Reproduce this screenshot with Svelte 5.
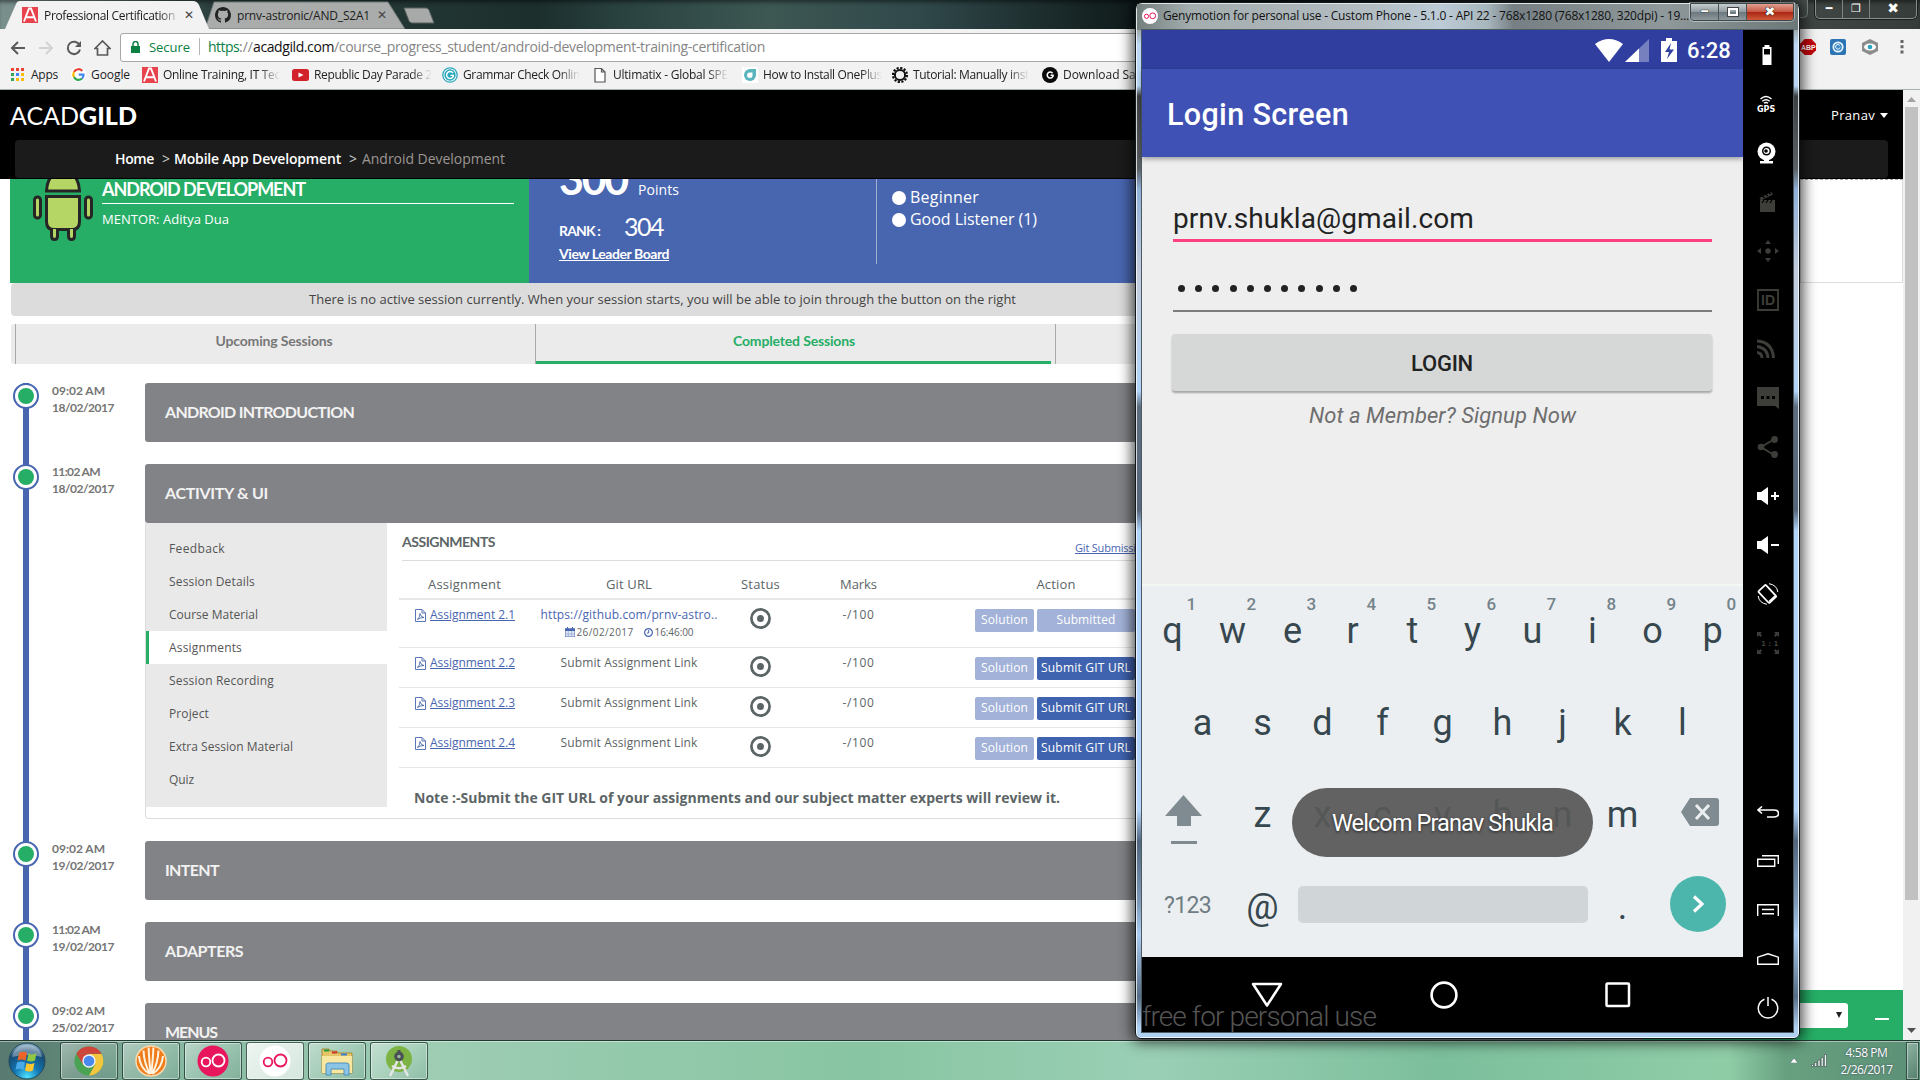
<script>
  // Spreads the letters of a label so that it fills the given width.
  function fit(node, width) {
    if (!width) return;
    const natural = node.getBoundingClientRect().width;
    const count = node.textContent.length;
    node.style.letterSpacing = `${(width - natural) / count}px`;
  }

  const bookmarks = [
    { icon: 'acad', label: 'Online Training, IT Tec', w: 117 },
    { icon: 'tube', label: 'Republic Day Parade 2', w: 118 },
    { icon: 'grammar', label: 'Grammar Check Onlin', w: 117 },
    { icon: 'doc', label: 'Ultimatix - Global SPE', w: 115 },
    { icon: 'leaf', label: 'How to Install OnePlus', w: 119 },
    { icon: 'gear', label: 'Tutorial: Manually inst', w: 116 },
    { icon: 'gblack', label: 'Download San', w: 80 },
  ];

  const menu = [
    ['Feedback', 56], ['Session Details', 86], ['Course Material', 89], ['Assignments', 73],
    ['Session Recording', 105], ['Project', 40], ['Extra Session Material', 124], ['Quiz', 25],
  ];

  const assignments = [
    { name: 'Assignment 2.1', sent: true },
    { name: 'Assignment 2.2' },
    { name: 'Assignment 2.3' },
    { name: 'Assignment 2.4' },
  ];

  const sessions = [
    { time: '09:02 AM', tw: 53, date: '18/02/2017', title: 'ANDROID INTRODUCTION', w: 189 },
    { time: '11:02 AM', tw: 48, date: '18/02/2017', title: 'ACTIVITY & UI', w: 103, open: true },
    { time: '09:02 AM', tw: 53, date: '19/02/2017', title: 'INTENT', w: 54 },
    { time: '11:02 AM', tw: 48, date: '19/02/2017', title: 'ADAPTERS', w: 78 },
    { time: '09:02 AM', tw: 53, date: '25/02/2017', title: 'MENUS', w: 52 },
  ];

  const row1 = 'qwertyuiop'.split('');
  const row2 = 'asdfghjkl'.split('');
  const row3 = 'zxcvbnm'.split('');
  const dots = Array(11).fill(0);
  const tools = ['battery', 'gps', 'cam', 'clap', 'move', 'id', 'rss', 'chat', 'share', 'volup', 'voldown', 'rotate', 'one'];
  const keys = ['back', 'recent', 'menu', 'home', 'power'];
  const tasks = ['chrome', 'shell', 'genyred', 'genywhite', 'folder', 'studio'];
</script>

{#snippet t(text, w, cls)}<span class="t {cls ?? ''}" use:fit={w}>{text}</span>{/snippet}

{#snippet icon(name)}
  {#if name === 'acad'}
    <svg width="16" height="16" viewBox="0 0 16 16"><rect width="16" height="16" fill="#e8434c" /><path d="M2 14.5 7 1.5h2l5 13M4.2 10.3h7.6" fill="none" stroke="#fff" stroke-width="1.9" /></svg>
  {:else if name === 'tube'}
    <svg width="17" height="16" viewBox="0 0 17 16"><rect y="2" width="17" height="12" rx="2.5" fill="#d2232a" /><path d="m6.5 5.5 5 2.5-5 2.5z" fill="#fff" /></svg>
  {:else if name === 'grammar'}
    <svg width="16" height="16" viewBox="0 0 16 16"><circle cx="8" cy="8" r="7.2" fill="#fff" stroke="#2ba8be" stroke-width="1.3" /><circle cx="8" cy="8" r="5.7" fill="#2ba8be" /><path d="M11 6a3.5 3.5 0 1 0 .3 3.4V8.4H8.5" fill="none" stroke="#fff" stroke-width="1.4" /></svg>
  {:else if name === 'doc'}
    <svg width="16" height="16" viewBox="0 0 16 16"><path d="M3 1.5h6.5L13 5v10H3zM9.5 1.5V5H13" fill="#fff" stroke="#555" stroke-width="1.2" /></svg>
  {:else if name === 'leaf'}
    <svg width="16" height="16" viewBox="0 0 16 16"><rect width="16" height="16" fill="#fff" /><path d="M14 2H8a6 6 0 1 0 6 6z" fill="#59b5bd" /><path d="M10.5 5.5H8A2.7 2.7 0 1 0 10.5 8z" fill="#fff" /></svg>
  {:else if name === 'gear'}
    <svg width="16" height="16" viewBox="0 0 16 16"><circle cx="8" cy="8" r="7" fill="none" stroke="#111" stroke-width="2.2" stroke-dasharray="2.2 1.46" /><circle cx="8" cy="8" r="5.1" fill="none" stroke="#111" stroke-width="2" /></svg>
  {:else if name === 'gblack'}
    <svg width="16" height="16" viewBox="0 0 16 16"><circle cx="8" cy="8" r="8" fill="#0a0a0a" /><path d="M10.6 6.2a3 3 0 1 0 .4 3V8.2H8.6" fill="none" stroke="#fff" stroke-width="1.6" /></svg>
  {:else if name === 'battery'}
    <svg width="22" height="22" viewBox="0 0 22 22"><path d="M5.5 3h2V1h5v2h2v18h-9z" fill="#fff" /><path d="M7 5h6v5.500H7z" fill="#000" /></svg>
  {:else if name === 'gps'}
    <svg width="22" height="20" viewBox="0 0 22 20"><path d="M3.500 5q5.500-5 11 0M5.300 7.300q3.700-3.200 7.400 0M7 9.300q2-1.600 4 0" fill="none" stroke="#fff" stroke-width="1.400" /><text x="0" y="17.500" class="gps">GPS</text></svg>
  {:else if name === 'cam'}
    <svg width="22" height="22" viewBox="0 0 22 22"><circle cx="9.500" cy="9.500" r="9" fill="#fff" /><circle cx="9.500" cy="9" r="4.500" /><circle cx="9.500" cy="9" r="3" fill="#fff" /><circle cx="9" cy="9" r="1.800" /><path d="M7 17h5v2h4v2.500H3V19h4z" fill="#fff" /></svg>
  {:else if name === 'clap'}
    <svg width="22" height="22" viewBox="0 0 22 22" fill="#3d3e39"><path d="M3 9h15v12H3z" /><path d="m2.500 7 12-6 1.500 2.500-12 6z" /><path d="m5 5 3 2m0-4 3 2m0-4 3 2M5 12l2-3m2 3 2-3m2 3 2-3" stroke="#000" stroke-width="1.200" /></svg>
  {:else if name === 'move'}
    <svg width="22" height="22" viewBox="0 0 22 22" fill="#3d3e39"><circle cx="11" cy="11" r="2.700" /><path d="m11 0 3 4H8zm0 22 3-4H8zM0 11l4-3v6zm22 0-4-3v6z" /></svg>
  {:else if name === 'id'}
    <svg width="22" height="22" viewBox="0 0 22 22"><path d="M1 1h20v20H1z" fill="none" stroke="#3d3e39" stroke-width="1.800" /><text x="4" y="16" class="idtext">ID</text></svg>
  {:else if name === 'rss'}
    <svg width="22" height="22" viewBox="0 0 22 22"><path d="M0 3q15.500 1 16.500 17M0 8.500Q10.500 10 11 20M0 14.500q5 .5 5 5.500" fill="none" stroke="#3d3e39" stroke-width="3" /></svg>
  {:else if name === 'chat'}
    <svg width="22" height="22" viewBox="0 0 22 22"><path d="M0 0h22v22l-4-3H0z" fill="#3d3e39" /><path d="M4 9h3v3H4zm5.500 0h3v3h-3zM15 9h3v3h-3z" /></svg>
  {:else if name === 'share'}
    <svg width="22" height="22" viewBox="0 0 22 22" fill="#3d3e39"><path d="M17 3.500 4 11l13 8" fill="none" stroke="#3d3e39" stroke-width="2" /><circle cx="4" cy="11" r="3.300" /><circle cx="17.500" cy="3.500" r="3.400" /><circle cx="17.500" cy="18.500" r="3.400" /></svg>
  {:else if name === 'volup'}
    <svg width="22" height="20" viewBox="0 0 22 20"><path d="M0 6h4l7-5v18l-7-5H0zm17 0h2v3h3v2h-3v3h-2v-3h-3V9h3z" fill="#fff" /></svg>
  {:else if name === 'voldown'}
    <svg width="22" height="20" viewBox="0 0 22 20"><path d="M0 6h4l7-5v18l-7-5H0zm14 3h8v2h-8z" fill="#fff" /></svg>
  {:else if name === 'rotate'}
    <svg width="22" height="22" viewBox="0 0 22 22" fill="none" stroke="#fff"><rect x="5.500" y="2.500" width="10" height="16" rx="1" transform="rotate(-43 11 11)" stroke-width="1.800" /><path d="m12 18.500 6-5.500" stroke-width="1.500" /><path d="M12 .7Q20 2 20.800 9M10 21.300Q2 20 1.200 13" stroke-width="1" /></svg>
  {:else if name === 'one'}
    <svg width="22" height="22" viewBox="0 0 22 22" fill="#3d3e39"><path d="M0 0h5L3.500 1.500 5 3.500 3.500 5 1.800 3.200 0 5zM22 0h-5l1.500 1.500L17 3.500 18.500 5l1.700-1.800L22 5zM0 22h5l-1.500-1.500L5 18.500 3.500 17l-1.700 1.800L0 17zM22 22h-5l1.500-1.500-1.500-2 1.500-1.500 1.700 1.800L22 17z" /><text x="4" y="13.500" class="onetext">1 : 1</text></svg>
  {:else if name === 'back'}
    <svg width="22" height="12" viewBox="0 0 22 12"><path d="M5 .5 1 4l4 3.500M1 4h16q4.500 0 4.500 3.500T17 11h-7" fill="none" stroke="#fff" stroke-width="1.600" /></svg>
  {:else if name === 'recent'}
    <svg width="22" height="12" viewBox="0 0 22 12"><path d="M.7 4.200h17v7H.7zM5 .8h16.300V9" fill="none" stroke="#fff" stroke-width="1.400" /></svg>
  {:else if name === 'menu'}
    <svg width="22" height="12" viewBox="0 0 22 12"><path d="M.7 12V.8h20.600V12M5 5.500h12M5 9.800h12" fill="none" stroke="#fff" stroke-width="1.400" /></svg>
  {:else if name === 'home'}
    <svg width="22" height="12" viewBox="0 0 22 12"><path d="M.7 11.300V4.200L11 .8l10.300 3.400v7.100z" fill="none" stroke="#fff" stroke-width="1.400" /></svg>
  {:else if name === 'power'}
    <svg width="22" height="22" viewBox="0 0 22 22"><path d="M7.500 2.200a9.700 9.700 0 1 0 7 0M11 0v9" fill="none" stroke="#fff" stroke-width="1.500" /></svg>
  {:else if name === 'chrome'}
    <svg width="30" height="30" viewBox="0 0 30 30"><circle cx="15" cy="15" r="14.500" fill="#4aa352" /><path d="M2.400 7.700A14.500 14.500 0 0 1 27.600 7.800H15z" fill="#d0453b" /><path d="M2.400 7.700 9 18.500 15 8h12.600z" fill="#d0453b" /><path d="M27.600 8H15l6.500 10-6.500 11.500A14.500 14.500 0 0 0 27.600 8" fill="#f4c63d" /><circle cx="15" cy="15" r="6.700" fill="#f2f2f2" /><circle cx="15" cy="15" r="5.300" fill="#4a8af0" /></svg>
  {:else if name === 'shell'}
    <svg width="32" height="32" viewBox="0 0 32 32"><circle cx="16" cy="16" r="15" fill="#ef7d1b" stroke="#fbd9ae" stroke-width="1.500" /><path d="M14.500 29Q5 23 4 11M15 29Q9 18 8.500 5.500M15.700 29Q14 14 13.600 2.500M16.300 29Q18 14 18.400 2.500M17 29Q23 18 23.500 5.500M17.500 29q9.500-6 10.500-18" fill="none" stroke="#fff3df" stroke-width="2" /></svg>
  {:else if name === 'genyred' || name === 'genywhite'}
    <svg width="32" height="32" viewBox="0 0 32 32"><circle cx="16" cy="16" r="15.500" fill={name === 'genyred' ? '#e8175d' : '#fff'} /><g fill="none" stroke={name === 'genyred' ? '#fff' : '#e8175d'} stroke-width="1.800"><circle cx="9" cy="17" r="4.300" /><circle cx="21.500" cy="15.500" r="6" /></g></svg>
  {:else if name === 'folder'}
    <svg width="34" height="32" viewBox="0 0 34 32"><path d="M2 4h7l1 2h7l1 2h14v20H2z" fill="#e5c567" stroke="#a98a35" /><path d="M4 4.500h5v2H4z" fill="#1c9a3e" /><path d="M12 6.500h5v2h-5z" fill="#c93030" /><path d="M21 8.500h6v2h-6z" fill="#3a7fd0" /><path d="M2 11h30v17H2z" fill="#f7e7a0" /><path d="M6 30V20q0-2 3-2h17q3 0 3 2v10h-5v-6H11v6z" fill="#8cc4e6" stroke="#4b8fbb" /></svg>
  {:else if name === 'studio'}
    <svg width="28" height="32" viewBox="0 0 28 32"><circle cx="14" cy="14" r="13" fill="#7cb342" /><circle cx="14" cy="11.500" r="4.800" fill="#4b5054" /><circle cx="14" cy="11.500" r="1.700" fill="#9cb8a8" /><path d="M14 5v3" stroke="#4b5054" stroke-width="3" /><path d="M12.500 16 5 31M15.500 16 23 31M7 21q7 4.500 14 0" fill="none" stroke="#e6e6e6" stroke-width="2.500" /></svg>
  {/if}
{/snippet}

<div class="desktop">
  <div class="browser">
    <div class="tabstrip">
      <svg class="tabshapes" width="440" height="29" viewBox="0 0 440 29">
        <path d="M205 29 214 2h174l17 27z" fill="#a9acaa" stroke="#6a7674" />
        <path d="M404 8h22q2 0 3 2l5 13h-22q-2 0-3-2z" fill="#a7aaa9" stroke="#56615f" />
        <path d="M5 29 16 4q1-3 4-3h173q4 0 6 4l10 24z" fill="#f2f2f2" />
      </svg>
      <div class="tab first">{@render icon('acad')}{@render t('Professional Certification', 131, 'tabname fadelate')}<span class="x">✕</span></div>
      <div class="tab second">
        <svg width="16" height="16" viewBox="0 0 16 16"><path fill="#222" d="M8 0C3.600 0 0 3.600 0 8c0 3.500 2.300 6.500 5.500 7.600.4.100.5-.2.500-.4v-1.500c-2 .5-2.700-.9-2.900-1.600-.4-.6-.9-.9-1.200-1 .6-.3 1.200.1 1.700.9.500.8 1.700.9 2.400.6.100-.5.300-.9.500-1.100-1.800-.2-3.600-.9-3.600-4 0-.9.300-1.600.8-2.200-.1-.2-.4-1 .1-2.100 0 0 .7-.2 2.200.8a7.500 7.500 0 0 1 4 0c1.500-1 2.200-.8 2.200-.8.400 1.100.2 1.900.1 2.100.5.600.8 1.300.8 2.200 0 3.100-1.900 3.800-3.700 4 .3.300.6.700.6 1.500v2.200c0 .2.100.5.600.4A8 8 0 0 0 16 8c0-4.400-3.600-8-8-8" /></svg>
        {@render t('prnv-astronic/AND_S2A1', 133, 'tabname')}<span class="x">✕</span>
      </div>
      <div class="wincontrols"><i>━</i><i>❐</i><i class="wide">✖</i></div>
    </div>

    <div class="toolbar">
      <div class="nav">
        <svg width="16" height="16" viewBox="0 0 16 16"><path d="M15 8H2M8 2 2 8l6 6" fill="none" stroke="#5a5a5a" stroke-width="2" /></svg>
        <svg width="16" height="16" viewBox="0 0 16 16"><path d="M1 8h13M8 2l6 6-6 6" fill="none" stroke="#d2d2d2" stroke-width="2" /></svg>
        <svg width="16" height="16" viewBox="0 0 16 16"><path d="M13.500 5A6.200 6.200 0 1 0 14 9.500" fill="none" stroke="#5a5a5a" stroke-width="2" /><path d="M15 1v6H9z" fill="#5a5a5a" /></svg>
        <svg width="17" height="16" viewBox="0 0 17 16"><path d="M1 8.500 8.500 1 16 8.500h-2.500V15h-10V8.500z" fill="none" stroke="#5a5a5a" stroke-width="1.700" /></svg>
      </div>
      <div class="omnibox">
        <svg width="9" height="12" viewBox="0 0 9 12"><path d="M0 5h9v7H0z" fill="#0b8043" /><path d="M2 5V3a2.500 2.500 0 0 1 5 0v2" fill="none" stroke="#0b8043" stroke-width="1.500" /></svg>
        {@render t('Secure', 41, 'secure')}
        <i class="bar"></i>
        {@render t('https', 31, 'url green')}{@render t('://', 14, 'url')}{@render t('acadgild.com', 81, 'url dark')}{@render t('/course_progress_student/android-development-training-certification', 431, 'url')}
      </div>
      <div class="exts">
        <svg width="16" height="16" viewBox="0 0 16 16"><path d="M4.700 0h6.600L16 4.700v6.600L11.300 16H4.700L0 11.300V4.700z" fill="#c4050a" /><text x="1" y="11" class="abp">ABP</text></svg>
        <svg width="16" height="16" viewBox="0 0 16 16"><rect width="16" height="16" rx="2" fill="#2c75b5" /><circle cx="8" cy="8" r="4.700" fill="#3b8bcb" stroke="#eaf5ff" stroke-width="1.700" /><path d="M9.800 6.500a2.300 2.300 0 1 0 .3 2" stroke="#fff" fill="none" /></svg>
        <svg width="16" height="16" viewBox="0 0 16 16"><path d="m8 0 8 4v8l-8 4-8-4V4z" fill="#8c8c8c" /><ellipse cx="8" cy="8" rx="6" ry="3.500" fill="#fff" /><circle cx="8" cy="8" r="2.300" fill="#2aa5c0" /></svg>
        <svg width="4" height="14" viewBox="0 0 4 14"><path d="M.5 0h3v3h-3zm0 5.200h3v3h-3zm0 5.200h3v3h-3z" fill="#666" /></svg>
      </div>
    </div>

    <div class="bookmarks">
      <div class="bm apps">
        <span class="appgrid">{#each ['r', 'r', 'r', 'g', 'b', 'y', 'g', 'y', 'y'] as c}<i class={c}></i>{/each}</span>
        {@render t('Apps', 27)}
      </div>
      <div class="bm google">
        <svg width="15" height="15" viewBox="0 0 15 15"><circle cx="7.500" cy="7.500" r="7.500" fill="#fff" /><g fill="none" stroke-width="2.200"><path d="M11.300 4A5 5 0 0 0 3 5" stroke="#ea4335" /><path d="M3 5a5 5 0 0 0 0 5" stroke="#fbbc05" /><path d="M3 10a5 5 0 0 0 8 1.500" stroke="#34a853" /><path d="M11 11.500A5 5 0 0 0 12.500 7.600H7.700" stroke="#4285f4" /></g></svg>
        {@render t('Google', 39)}
      </div>
      {#each bookmarks as b}
        <div class="bm site">{@render icon(b.icon)}{@render t(b.label, b.w, 'fade')}</div>
      {/each}
    </div>

    <div class="viewport">
      <div class="page">
        <header>
          <div class="logo">{@render t('ACAD', 69)}{@render t('GILD', 58, 'heavy')}</div>
          <div class="user">{@render t('Pranav', 44)}<svg width="8" height="5" viewBox="0 0 8 5"><path d="M0 0h8L4 5z" fill="#fff" /></svg></div>
        </header>
        <div class="crumbwrap">
          <div class="crumbs">
            {@render t('Home', 39, 'b')}{@render t('>', 8, 'sep')}{@render t('Mobile App Development', 167, 'b')}{@render t('>', 8, 'sep')}{@render t('Android Development', 143, 'dim')}
          </div>
        </div>

        <div class="hero">
          <div class="course">
            <svg class="droid" width="60" height="80" viewBox="0 0 60 80"><g fill="#b5d665" stroke="#262626" stroke-width="3"><path d="M13.500 30Q14.500 11 30 11t16.500 19z" /><path d="M13.500 35.500h33v25q0 8-7 8h-19q-7 0-7-8z" /><rect x="1.500" y="36" width="6" height="21" rx="3" /><rect x="52.500" y="36" width="6" height="21" rx="3" /><path d="M18.500 68v7q0 3.500 3 3.500t3-3.500v-7M35.500 68v7q0 3.500 3 3.500t3-3.500v-7" /></g></svg>
            <div class="cinfo">
              <div class="ctitle">{@render t('ANDROID DEVELOPMENT', 203)}</div>
              <div class="mentor">{@render t('MENTOR: Aditya Dua', 127)}</div>
            </div>
          </div>
          <div class="score">
            <div class="points">{@render t('300', 68, 'big')}{@render t('Points', 41, 'pts')}</div>
            <div class="rank">{@render t('RANK :', 41, 'rl')}{@render t('304', 39, 'rn')}</div>
            <div class="leader">{@render t('View Leader Board', 110)}</div>
          </div>
          <div class="badges">
            <div><i></i>{@render t('Beginner', 69)}</div>
            <div><i></i>{@render t('Good Listener (1)', 127)}</div>
          </div>
          <div class="blank"></div>
        </div>

        <div class="notice">{@render t('There is no active session currently. When your session starts, you will be able to join through the button on the right', 707)}</div>

        <div class="tabs">
          <div class="stab">{@render t('Upcoming Sessions', 117)}</div>
          <div class="stab on">{@render t('Completed Sessions', 122)}</div>
          <div class="stab"></div>
        </div>

        <div class="timeline">
          {#each sessions as s}
            <div class="session" class:open={s.open}>
              <div class="rail"><i></i></div>
              <div class="when">{@render t(s.time, s.tw)}{@render t(s.date, 62)}</div>
              <div class="card">
                <div class="head">{@render t(s.title, s.w)}</div>
                {#if s.open}
                  <div class="body">
                    <nav>
                      {#each menu as m}
                        <div class="mi" class:active={m[0] === 'Assignments'}>{@render t(m[0], m[1])}</div>
                      {/each}
                    </nav>
                    <section>
                      <div class="shead"><div class="st">{@render t('ASSIGNMENTS', 93)}</div><div class="guide">{@render t('Git Submission Guide', 106)}</div></div>
                      <div class="tr th">
                        <div>{@render t('Assignment', 73)}</div><div>{@render t('Git URL', 46)}</div><div>{@render t('Status', 39)}</div><div>{@render t('Marks', 37)}</div><div class="act">{@render t('Action', 39)}</div>
                      </div>
                      {#each assignments as a}
                        <div class="tr" class:tall={a.sent}>
                          <div class="name">
                            <svg width="11" height="13" viewBox="0 0 11 13"><path d="M.5.500H7L10.500 4v8.500H.5zM7 .5V4h3.500M2.500 10.500Q5 8 5 4.500q1 4 4 4-4 0-6.500 2" fill="none" stroke="#4866b0" stroke-width=".9" /></svg>
                            {@render t(a.name, 85, 'link')}
                          </div>
                          <div class="git">
                            {#if a.sent}
                              {@render t('https://github.com/prnv-astro..', 177, 'blue')}
                              <div class="stamp">
                                <svg width="10" height="10" viewBox="0 0 10 10"><path d="M0 2h10v8H0z" fill="#dfe5f3" stroke="#4866b0" /><path d="M0 1.500h10V4H0zM2 0h1v2H2zm5 0h1v2H7z" fill="#4866b0" /><path d="M3.300 4v6M6.600 4v6M0 7h10" stroke="#8a9dcd" stroke-width=".6" /></svg>
                                {@render t('26/02/2017', 57)}
                                <svg class="clock" width="9" height="9" viewBox="0 0 9 9"><circle cx="4.500" cy="4.500" r="3.900" fill="none" stroke="#4866b0" stroke-width="1.200" /><path d="M4.700 2v3H3" fill="none" stroke="#4866b0" /></svg>
                                {@render t('16:46:00', 39)}
                              </div>
                            {:else}
                              {@render t('Submit Assignment Link', 137)}
                            {/if}
                          </div>
                          <div class="status"><svg width="21" height="21" viewBox="0 0 21 21"><circle cx="10.500" cy="10.500" r="9.100" fill="none" stroke="#5c6566" stroke-width="2.700" /><circle cx="10.500" cy="10.500" r="3.500" fill="#5c6566" /></svg></div>
                          <div>{@render t('-/100', 32)}</div>
                          <div class="btns"><b class="soft">{@render t('Solution', 47)}</b><b class:soft={a.sent}>{#if a.sent}{@render t('Submitted', 59)}{:else}{@render t('Submit GIT URL', 90)}{/if}</b></div>
                        </div>
                      {/each}
                      <div class="note">{@render t('Note :-Submit the GIT URL of your assignments and our subject matter experts will review it.', 646)}</div>
                    </section>
                  </div>
                {/if}
              </div>
            </div>
          {/each}
        </div>
        <div class="chat"><span class="sel"><svg width="6" height="6" viewBox="0 0 6 6"><path d="M0 0h6L3 6z" fill="#222" /></svg></span><i></i></div>
      </div>
      <div class="scroll">
        <svg width="9" height="5" viewBox="0 0 9 5"><path d="M0 5h9L4.500 0z" fill="#a3a3a3" /></svg>
        <div class="thumb"></div>
        <svg width="9" height="5" viewBox="0 0 9 5"><path d="M0 0h9L4.500 5z" fill="#505050" /></svg>
      </div>
    </div>
  </div>

  <div class="taskbar">
    <svg class="orb" width="38" height="38" viewBox="0 0 38 38">
      <defs><radialGradient id="orb" cx=".5" cy=".95" r=".9"><stop offset="0" stop-color="#4fe3ff" /><stop offset=".4" stop-color="#1277b4" /><stop offset=".8" stop-color="#174a72" /><stop offset="1" stop-color="#7fa5bd" /></radialGradient></defs>
      <circle cx="19" cy="19" r="18" fill="url(#orb)" stroke="#23485c" />
      <path d="M4 15Q7 3 19 3t15 12q-15-4-30 0" fill="#fff" opacity=".35" />
      <path d="M11 11q4-2.500 8 0l-1.500 7.500q-4-2-8 0z" fill="#ef6428" /><path d="M20.500 11.500q4 2 8-.5L27 18.500q-4 2-8 .3z" fill="#8fc742" /><path d="M9 20.500q4-2 8 0L15.500 28q-4-2.500-8 0z" fill="#4aa9e8" /><path d="M18.500 21q4 2 8 0L25 28.500q-4 2-8 0z" fill="#fbc630" />
    </svg>
    <div class="tasks">{#each tasks as k}<div class="task" class:current={k === 'genywhite'}>{@render icon(k)}</div>{/each}</div>
    <div class="tray">
      <svg width="8" height="5" viewBox="0 0 8 5"><path d="M0 5h8L4 0z" fill="#fff" stroke="#456" stroke-width=".5" /></svg>
      <svg class="bars" width="16" height="13" viewBox="0 0 16 13"><path d="M.5 10.500h2v2h-2zM3.700 8.500h2v4h-2zM7 6h2v6.500H7zM10.200 3.500h2v9h-2zM13.400.5h2v12h-2z" fill="#fff" stroke="#344" stroke-width=".6" /></svg>
      <div class="clk">{@render t('4:58 PM', 42)}{@render t('2/26/2017', 52)}</div>
      <div class="peek"></div>
    </div>
  </div>

  <div class="hidden-button"></div>
  <div class="phone">
    <div class="title">
      <svg width="16" height="16" viewBox="0 0 16 16"><circle cx="8" cy="8" r="8" fill="#fff" /><circle cx="4.500" cy="8.300" r="2.100" fill="none" stroke="#e8175d" /><circle cx="10.700" cy="7.800" r="2.900" fill="none" stroke="#e8175d" /></svg>
      {@render t('Genymotion for personal use - Custom Phone - 5.1.0 - API 22 - 768x1280 (768x1280, 320dpi) - 19...', 526)}
      <div class="pctl"><i>━</i><i><s></s></i><i class="red">✖</i></div>
    </div>
    <div class="glass">
      <div class="screen">
        <div class="sbar">
          <svg width="28" height="23" viewBox="0 0 28 23"><path d="M0 5Q14-5 28 5L14 23z" fill="#fff" /></svg>
          <svg class="sig" width="24" height="23" viewBox="0 0 24 23"><path d="M0 23 24 0v23z" fill="#7680bf" /><path d="M0 23 14 9.500V23z" fill="#fff" /></svg>
          <svg class="bat" width="16" height="24" viewBox="0 0 16 24"><path d="M0 3h5V0h6v3h5v21H0z" fill="#fff" /><path d="m10 5-6 9h4l-2 7 7-9.500H8.500z" fill="#303f9f" /></svg>
          {@render t('6:28', 44)}
        </div>
        <div class="appbar">{@render t('Login Screen', 182)}</div>
        <div class="form">
          <div class="email">{@render t('prnv.shukla@gmail.com', 301)}</div>
          <div class="pass">{#each dots as d}<i></i>{/each}</div>
          <div class="login">{@render t('LOGIN', 62)}</div>
          <div class="signup">{@render t('Not a Member? Signup Now', 267)}</div>
        </div>
        <div class="kb">
          <div class="krow">{#each row1 as k, i}<span class="key"><small>{(i + 1) % 10}</small>{k}</span>{/each}</div>
          <div class="krow">{#each row2 as k}<span class="key">{k}</span>{/each}</div>
          <div class="krow">
            <span class="key edge"><svg width="38" height="50" viewBox="0 0 38 50"><path d="M18.500 0 37 21H26v10H12V21H0zM6 46h26v3H6z" fill="#7f8b90" /></svg></span>
            {#each row3 as k}<span class="key">{k}</span>{/each}
            <span class="key edge bk"><svg width="38" height="28" viewBox="0 0 38 28"><path d="M9 0h26q3 0 3 3v22q0 3-3 3H9L0 14z" fill="#7f8b90" /><path d="m15 7 13 14m0-14L15 21" stroke="#eceff1" stroke-width="3" /></svg></span>
          </div>
          <div class="krow">
            <span class="key edge num">{@render t('?123', 47)}</span><span class="key at">@</span><span class="space"></span><span class="key">.</span>
            <span class="key edge enter"><span class="go"><svg width="12" height="18" viewBox="0 0 12 18"><path d="m2 1.500 8 7.500-8 7.500" fill="none" stroke="#fff" stroke-width="3.200" /></svg></span></span>
          </div>
          <div class="toast">{@render t('Welcom Pranav Shukla', 221)}</div>
        </div>
        <div class="navbar">
          <svg width="32" height="26" viewBox="0 0 32 26"><path d="M2 2h28L16 23.500z" fill="none" stroke="#fff" stroke-width="2.500" stroke-linejoin="round" /></svg>
          <svg width="28" height="28" viewBox="0 0 28 28"><circle cx="14" cy="14" r="12.400" fill="none" stroke="#fff" stroke-width="2.600" /></svg>
          <svg width="26" height="26" viewBox="0 0 26 26"><rect x="1.500" y="1.500" width="22.500" height="22.500" rx="1" fill="none" stroke="#fff" stroke-width="2.500" /></svg>
          <div class="watermark">{@render t('free for personal use', 234)}</div>
        </div>
      </div>
      <div class="tools">
        {#each tools as k}<div class="tool">{@render icon(k)}</div>{/each}
        <div class="push"></div>
        {#each keys as k}<div class="tool">{@render icon(k)}</div>{/each}
      </div>
    </div>
  </div>
</div>

<style>
  :global(body) { margin: 0; overflow: hidden; }
  .desktop { position: relative; width: 1920px; height: 1080px; overflow: hidden; background: #fff; font-family: "Open Sans", "Noto Sans", sans-serif; }
  .desktop, .desktop :global(*) { box-sizing: border-box; }
  svg { display: block; flex: none; }
  i { font-style: normal; }
  .t { display: inline-block; white-space: nowrap; flex: none; }
  .fade { -webkit-mask-image: linear-gradient(90deg, #000 82%, transparent 100%); mask-image: linear-gradient(90deg, #000 82%, transparent 100%); }
  .fadelate { -webkit-mask-image: linear-gradient(90deg, #000 88%, rgba(0, 0, 0, .25) 100%); mask-image: linear-gradient(90deg, #000 88%, rgba(0, 0, 0, .25) 100%); }

  .browser { height: 1040px; display: flex; flex-direction: column; }
  .tabstrip { position: relative; height: 29px; display: flex; align-items: center; background: linear-gradient(90deg, #7a908d 0, #6c817d 4%, #2b403e 11%, #1c2f2d 28%, #2b4442 33%, #3d5753 40%, #30484a 48%, #182626 56%, #0d1718 60%, #3f4643 94%, #363c3a 100%); box-shadow: inset 0 4px 4px -2px rgba(0, 0, 0, .5); }
  .tabshapes { position: absolute; left: 0; top: 0; }
  .tab { position: relative; display: flex; align-items: center; padding-top: 1px; }
  .tab.first { width: 172px; margin: 0 21px 0 22px; }
  .tab.second { width: 180px; }
  .tabname { margin-left: 6px; font-size: 12px; color: #1c1c1c; }
  .x { margin-left: auto; font-size: 12px; color: #444; font-family: "DejaVu Sans", sans-serif; }
  .tab.second .x { margin-right: 8px; }
  .wincontrols { align-self: flex-start; display: flex; margin-left: auto; margin-right: 3px; width: 102px; height: 19px; border: 1px solid #85908c; border-top: 0; border-radius: 0 0 5px 5px; box-shadow: 0 0 0 1px #1a1f1e; color: #fff; font: 11px/17px "DejaVu Sans", sans-serif; text-align: center; }
  .wincontrols i { width: 27px; border-right: 1px solid #7a8481; }
  .wincontrols .wide { width: 46px; border: 0; font-size: 14px; }

  .toolbar { height: 33px; display: flex; align-items: center; background: #f2f2f2; padding: 4px 16px 0 10px; }
  .nav { display: flex; gap: 12px; width: 110px; }
  .omnibox { flex: 1; height: 29px; display: flex; align-items: center; background: #fff; border: 1px solid #a8a8a8; border-radius: 3px; padding: 0 0 2px 10px; font-size: 14px; color: #858585; }
  .secure { margin-left: 9px; color: #0b8043; font-size: 13px; }
  .bar { width: 1px; height: 17px; background: #b5b5b5; margin: 0 8px 0 9px; }
  .green { color: #0b8043; }
  .dark { color: #111; }
  .exts { display: flex; align-items: center; gap: 16px; width: 104px; margin-left: 8px; padding-bottom: 2px; }
  .exts svg:last-child { margin-left: 6px; }
  .exts svg:nth-child(2) { margin-left: -2px; }
  .abp { font: bold 7px "Liberation Sans", sans-serif; fill: #fff; }

  .bookmarks { height: 28px; display: flex; align-items: center; background: #f2f2f2; border-bottom: 1px solid #a9b3ae; padding: 0 0 2px 11px; overflow: hidden; font-size: 12px; color: #222; }
  .bm { display: flex; align-items: center; gap: 6px; flex: none; }
  .apps { width: 60px; gap: 7px; }
  .google { width: 71px; gap: 5px; }
  .site { width: 150px; gap: 5px; }
  .appgrid { display: grid; grid-template-columns: repeat(3, 3px); gap: 2px; }
  .appgrid i { width: 3px; height: 3px; background: #fbbc05; }
  .appgrid .r { background: #ea4335; }
  .appgrid .g { background: #34a853; }
  .appgrid .b { background: #4285f4; }

  .viewport { flex: 1; display: flex; min-height: 0; }
  .page { position: relative; width: 1903px; overflow: hidden; background: #fff; }
  header { height: 50px; background: #000; display: flex; align-items: center; justify-content: space-between; padding: 0 15px 0 10px; color: #fff; }
  .logo { font: 400 25px/25px Lato, sans-serif; display: flex; }
  .heavy { font-weight: 900; }
  .user { display: flex; align-items: center; gap: 5px; font-size: 13px; }
  .crumbwrap { height: 39px; background: #000; padding: 0 15px; }
  .crumbs { height: 38px; background: #1b1b1b; border-radius: 4px; display: flex; align-items: center; padding: 0 0 2px 100px; color: #fff; font-size: 14px; }
  .crumbs .b { font-weight: 600; }
  .sep { margin: 0 4px 0 8px; color: #ccc; }
  .dim { color: #9c9693; margin-left: 1px; }

  .hero { height: 104px; display: flex; margin-left: 10px; color: #fff; overflow: hidden; }
  .course { width: 519px; background: #26ae66; display: flex; padding-left: 23px; }
  .droid { margin-top: -18px; }
  .cinfo { flex: 1; margin: 0 15px 0 9px; }
  .ctitle { height: 25px; border-bottom: 1px solid #fff; font: 700 18px/21px Lato, sans-serif; }
  .mentor { font-size: 13px; line-height: 30px; }
  .score { width: 348px; height: 85px; background: #4866b0; padding-left: 30px; box-shadow: 0 20px 0 #4866b0; border-right: 1px solid #a0afd3; }
  .points { display: flex; height: 36px; align-items: flex-start; }
  .big { font: 700 43px/46px Lato, sans-serif; margin-top: -23px; }
  .pts { font-size: 14px; line-height: 22px; margin-left: 11px; }
  .rank { display: flex; align-items: baseline; height: 30px; line-height: 22px; font-family: Lato, sans-serif; }
  .rl { font-size: 14px; font-weight: 700; }
  .rn { font-size: 25px; margin-left: 24px; }
  .leader { font: 700 14px/18px Lato, sans-serif; }
  .leader .t, .guide .t { text-decoration: underline; }
  .badges { width: 923px; background: #4866b0; padding: 8px 0 0 15px; font-size: 16px; line-height: 22px; }
  .badges div { display: flex; align-items: center; gap: 4px; height: 22px; }
  .badges .t { margin-top: -2px; }
  .badges i { width: 14px; height: 14px; border-radius: 50%; background: #fff; }
  .blank { flex: 1; background: #fff; border: 1px solid #ddd; border-top: 1px dashed #aaa; }

  .notice { height: 33px; margin-left: 11px; width: 1780px; background: #dcdcdc; border-radius: 4px; padding-left: 298px; font-size: 13px; line-height: 32px; color: #444; }
  .tabs { height: 40px; width: 1780px; margin: 8px 0 0 11px; background: #ebebeb; border-radius: 3px; display: flex; padding-left: 4px; }
  .stab { width: 520px; border-left: 1px solid #a9a9a9; display: flex; justify-content: center; font: 700 14px/34px Lato, sans-serif; color: #777; padding-right: 3px; }
  .stab.on { color: #26ae66; position: relative; }
  .stab.on::after { content: ""; position: absolute; left: 0; right: 4px; bottom: 0; height: 3px; background: #26ae66; }

  .timeline { margin-top: 19px; }
  .session { display: flex; height: 81px; }
  .session.open { height: 377px; }
  .rail { width: 26px; flex: none; margin-left: 13px; background: linear-gradient(#4866b0, #4866b0) 10px 0 / 6px 100% no-repeat; }
  .rail i { display: block; width: 26px; height: 26px; border-radius: 50%; border: 2px solid #4866b0; background: #fff; padding: 3px; }
  .rail i::after { content: ""; display: block; width: 16px; height: 16px; border-radius: 50%; background: #26ae66; }
  .when { width: 106px; flex: none; margin-top: -1px; padding-left: 13px; display: flex; flex-direction: column; align-items: flex-start; font: 700 12px/17px Lato, sans-serif; color: #757575; }
  .card { width: 1600px; flex: none; }
  .head { height: 59px; border-radius: 3px; background: #828386; color: #f2f2f2; padding-left: 20px; font: 700 16px/57px Lato, sans-serif; }
  .body { height: 296px; border: 1px solid #ddd; border-top: 0; border-radius: 0 0 4px 4px; display: flex; }
  nav { width: 241px; height: 284px; background: #e9e9e9; padding-top: 9px; font-size: 12px; color: #555; }
  .mi { height: 33px; line-height: 33px; padding-left: 23px; }
  .mi.active { background: #fff; box-shadow: inset 3px 0 #26ae66; }
  section { flex: 1; padding-left: 12px; font-size: 12px; color: #5c6566; }
  .shead { height: 38px; margin-left: 3px; border-bottom: 1px solid #ddd; display: flex; }
  .st { width: 673px; font: 700 14px/38px Lato, sans-serif; }
  .guide { font-size: 11px; line-height: 50px; color: #4866b0; }
  .tr { display: grid; grid-template-columns: 131px 198px 65px 131px 320px; height: 40px; border-bottom: 1px solid #e7e7e7; line-height: 16px; padding-top: 7px; text-align: center; }
  .th { height: 39px; border-bottom-width: 2px; padding-top: 15px; font-size: 13px; font-weight: 500; }
  .tr.tall { height: 48px; }
  .name { display: flex; gap: 4px; padding-left: 16px; align-items: flex-start; }
  .name svg { margin-top: 2px; }
  .link { color: #4866b0; text-decoration: underline; }
  .blue { color: #4866b0; }
  .stamp { display: flex; align-items: center; justify-content: center; font-size: 10px; gap: 2px; height: 18px; }
  .clock { margin-left: 8px; }
  .status { display: flex; justify-content: center; padding-top: 1px; }
  .btns { display: flex; gap: 3px; padding: 2px 0 0 51px; }
  .btns b { width: 59px; height: 23px; display: flex; justify-content: center; align-items: center; padding-bottom: 2px; border-radius: 2px; background: #4063af; color: #fff; font-weight: 500; font-size: 12px; }
  .btns b.soft { background: #a3b2d8; }
  .btns b:last-child { width: 98px; }
  .act { padding-right: 56px; }
  .note { font-size: 14px; font-weight: 700; padding-left: 15px; line-height: 60px; }

  .chat { position: absolute; right: 0; bottom: 0; width: 260px; height: 50px; background: #26ae66; display: flex; align-items: center; justify-content: flex-end; padding-right: 14px; gap: 27px; }
  .chat .sel { width: 180px; height: 25px; background: #fff; border-radius: 3px; display: flex; align-items: center; justify-content: flex-end; padding-right: 6px; }
  .chat i { width: 14px; height: 2px; background: #fff; margin-top: 8px; }
  .scroll { width: 17px; background: #f1f1f1; display: flex; flex-direction: column; align-items: center; padding: 7px 0; }
  .thumb { width: 13px; height: 793px; margin: 5px 0 auto; background: #c1c1c1; }

  .taskbar { position: relative; height: 40px; display: flex; align-items: center; border-top: 1px solid #1f3b31; background: linear-gradient(90deg, #587a70 0, #5e8476 3%, #86b59f 8%, #9ecdb4 22%, #88c5a2 45%, #9acfb5 60%, #7cbf9c 75%, #8fcda7 90%, #67a07f 93%, #5c9077 100%); box-shadow: inset 0 1px rgba(255, 255, 255, .45); }
  .orb { margin-left: 8px; }
  .tasks { display: flex; gap: 4px; margin-left: 14px; }
  .task { width: 58px; height: 38px; display: flex; align-items: center; justify-content: center; border: 1px solid rgba(20, 50, 40, .75); border-radius: 3px; box-shadow: inset 0 0 0 1px rgba(255, 255, 255, .45); background: linear-gradient(135deg, rgba(255, 255, 255, .42), rgba(255, 255, 255, .14) 50%, rgba(80, 130, 110, .2)); }
  .task.current { background: linear-gradient(135deg, rgba(255, 255, 255, .85), rgba(255, 255, 255, .6)); }
  .tray { margin-left: auto; display: flex; align-items: center; height: 39px; color: #fff; font-size: 12px; line-height: 17px; }
  .bars { margin-left: 13px; }
  .clk { display: flex; flex-direction: column; align-items: center; width: 79px; text-shadow: 0 0 2px #345; }
  .peek { width: 13px; height: 38px; margin-right: 1px; border: 1px solid #2f5145; box-shadow: inset 0 0 0 1px rgba(255, 255, 255, .4); background: linear-gradient(135deg, #8fb3a3, #55806d); }

  .hidden-button { position: absolute; left: 1780px; top: 0; width: 28px; height: 18px; border: 1px solid #7f8986; border-top: 0; border-radius: 0 0 5px; background: #4a5250; }
  .phone { position: absolute; left: 1135px; top: 2px; width: 665px; height: 1037px; border: 1px solid #10181c; border-radius: 7px 7px 6px 6px; display: flex; flex-direction: column; padding: 0 6px 6px; background: linear-gradient(180deg, #8b9698 0, #9aa5a7 2.500%, #bcd8f5 4%, #b9d6f6 8%, #3c4043 9%, #5b6064 16%, #8fb0d8 18%, #c2cbdc 26%, #b4d4f5 36%, #b0d3f8 37.500%, #5d6e80 39%, #56677c 49%, #b1d4fa 51%, #b4d6fc 78%, #52677f 81%, #7f9cba 87%, #abcdf1 90%, #566e86 96%, #b0d0f2 99%); box-shadow: inset 0 0 0 1px rgba(255, 255, 255, .75), 0 0 14px 3px rgba(0, 0, 0, .7); }
  .title { height: 26px; display: flex; align-items: center; gap: 5px; font-size: 12px; color: #111; background: linear-gradient(90deg, #74807e 0, #a3adae 8%, #b3bdc2 35%, #bccbd6 46%, #a8b6bd 53%, #768084 57%, #8f999b 80%, #6c7778 100%); margin: 1px -5px 0; padding: 0 5px 3px; }
  .pctl { align-self: flex-start; display: flex; height: 18px; margin: -1px 0 0 -4px; border: 1px solid #3c474a; border-radius: 0 0 4px 4px; overflow: hidden; flex: none; box-shadow: 0 0 0 1px rgba(255, 255, 255, .4); color: #fff; font: 11px/16px "DejaVu Sans", sans-serif; text-align: center; text-shadow: 0 0 1px #000, 0 0 1px #000; }
  .pctl i { width: 28px; border-right: 1px solid #4a5558; background: linear-gradient(#c5cdcf, #8f9a9e 50%, #69767b 50%, #8d999d); display: flex; justify-content: center; align-items: center; }
  .pctl i.red { width: 46px; border: 0; font-size: 13px; background: linear-gradient(#e2a090, #c65945 48%, #a92411 50%, #d0593a); }
  .pctl s { width: 10px; height: 8px; border: 2px solid #fff; outline: 1px solid #444; }
  .glass { flex: 1; display: flex; min-height: 0; background: #000; box-shadow: 0 0 0 1px #4c5a64; }
  .screen { width: 601px; display: flex; flex-direction: column; font-family: Roboto, sans-serif; }
  .sbar { height: 39px; background: #303f9f; display: flex; align-items: center; justify-content: flex-end; padding: 1px 12px 0 0; color: #fff; font-size: 22px; font-weight: 500; }
  .sig { margin-left: 2px; }
  .bat { margin: 0 10px 0 12px; }
  .appbar { position: relative; height: 88px; background: #3f51b5; color: #fff; padding-left: 25px; font-size: 30.500px; font-weight: 500; line-height: 92px; box-shadow: 0 2px 5px rgba(0, 0, 0, .35); }
  .form { height: 427px; background: #eee; padding: 41px 31px 0; color: #222; }
  .email { height: 44px; border-bottom: 3px solid #ff4081; font-size: 28px; line-height: 42px; }
  .pass { height: 70px; border-bottom: 2px solid #7c7c7c; display: flex; gap: 10.200px; padding: 43px 0 0 5px; }
  .pass i { width: 7px; height: 7px; border-radius: 50%; background: #222; }
  .login { margin: 22px 0 0 -1px; height: 57px; border-radius: 3px; background: #d6d7d7; box-shadow: 0 2px 2px rgba(0, 0, 0, .3); display: flex; justify-content: center; font-size: 22px; font-weight: 500; line-height: 60px; }
  .signup { display: flex; justify-content: center; font-size: 22px; line-height: 50px; font-style: italic; color: #6e6e6e; }
  .kb { position: relative; height: 373px; background: #eceff1; border-top: 2px solid #f4f7f3; color: #37474f; }
  .krow { display: flex; justify-content: center; height: 92px; }
  .key { position: relative; width: 60px; flex: none; text-align: center; font-size: 36px; line-height: 90px; }
  .key small { position: absolute; left: 44px; top: 10px; font-size: 17px; line-height: 17px; font-weight: 500; color: #74838a; }
  .key.edge { width: 90px; display: flex; justify-content: center; align-items: center; padding: 8px 8px 0 0; }
  .key.edge.bk { padding: 0 0 8px 5px; }
  .key.edge.num { font-size: 23px; color: #6f7d84; padding: 0 0 4px; }
  .key.edge.enter { padding: 0; }
  .key.at { line-height: 90px; }
  .space { width: 290px; height: 37px; margin: 24px 5px 0; border-radius: 5px; background: #d0d5d8; }
  .go { width: 56px; height: 56px; border-radius: 50%; background: #4db6ac; display: flex; align-items: center; justify-content: center; margin-top: -8px; }
  .toast { position: absolute; left: 150px; top: 202px; width: 301px; height: 69px; border-radius: 35px; background: rgba(87, 87, 87, .93); color: #fff; font-size: 23.500px; line-height: 70px; display: flex; justify-content: center; text-shadow: 0 1px 3px #222; }
  .navbar { position: relative; height: 75px; background: #000; display: flex; align-items: center; justify-content: space-between; padding: 0 112px 0 109px; }
  .watermark { position: absolute; left: 0; bottom: 0; font-size: 28px; font-weight: 300; line-height: 30px; color: #555; }
  .tools { width: 49px; display: flex; flex-direction: column; align-items: center; }
  .tool { height: 49.100px; display: flex; align-items: center; }
  .push { height: 120px; }
  .gps { font: bold 8px "DejaVu Sans", sans-serif; fill: #fff; }
  .idtext { font: bold 14px "Liberation Sans", sans-serif; }
  .idtext, .onetext { fill: #3d3e39; }
  .onetext { font: bold 7px "DejaVu Sans", sans-serif; }
</style>
